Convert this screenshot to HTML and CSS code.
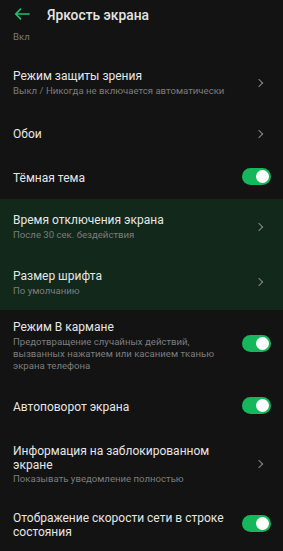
FILE: index.html
```html
<!DOCTYPE html>
<html lang="ru">
<head>
<meta charset="utf-8">
<link rel="stylesheet" href="styles.css">
</head>
<body>
<div class="screen">
  <header class="topbar">
    <svg class="back" width="16" height="12" viewBox="0 0 16 12">
      <path d="M15 6H2M6.5 1.2L1.7 6l4.8 4.8" fill="none" stroke="#22c06c" stroke-width="1.7" stroke-linecap="round" stroke-linejoin="round"/>
    </svg>
    <h1 class="title">Яркость экрана</h1>
  </header>
  <div class="clip"><span class="clip-text">Вкл</span></div>

  <div class="row h56 up3">
    <div class="text"><div class="name">Режим защиты зрения</div><div class="sub">Выкл / Никогда не включается автоматически</div></div>
    <span class="chev"></span>
  </div>
  <div class="row h44">
    <div class="text"><div class="name">Обои</div></div>
    <span class="chev"></span>
  </div>
  <div class="row h43">
    <div class="text"><div class="name">Тёмная тема</div></div>
    <span class="toggle"></span>
  </div>
  <div class="hl">
    <div class="row h55">
      <div class="text"><div class="name">Время отключения экрана</div><div class="sub">После 30 сек. бездействия</div></div>
      <span class="chev"></span>
    </div>
    <div class="row h56">
      <div class="text"><div class="name">Размер шрифта</div><div class="sub">По умолчанию</div></div>
      <span class="chev"></span>
    </div>
  </div>
  <div class="row h76 up6">
    <div class="text"><div class="name">Режим В кармане</div><div class="sub multi">Предотвращение случайных действий, вызванных нажатием или касанием тканью экрана телефона</div></div>
    <span class="toggle"></span>
  </div>
  <div class="row h42">
    <div class="text"><div class="name">Автоповорот экрана</div></div>
    <span class="toggle"></span>
  </div>
  <div class="row h72">
    <div class="text"><div class="name multi">Информация на заблокированном экране</div><div class="sub">Показывать уведомление полностью</div></div>
    <span class="chev"></span>
  </div>
  <div class="row h50">
    <div class="text"><div class="name multi">Отображение скорости сети в строке состояния</div></div>
    <span class="toggle"></span>
  </div>
</div>
</body>
</html>
```
FILE: styles.css
```css
* { box-sizing: border-box; }
html, body { margin: 0; padding: 0; background: #131313; }
body { font-family: Roboto, "Noto Sans", sans-serif; color: #e6e6e6; }
.screen { width: 283px; height: 551px; overflow: hidden; background: #131313; }
.topbar { height: 31px; display: flex; align-items: center; padding-left: 14px; }
.back { display: block; margin-top: -3px; }
.title { margin: -1px 0 0 17px; font-size: 13.8px; font-weight: 500; color: #e4e4e4; line-height: 20px; }
.clip { height: 23px; overflow: hidden; padding-left: 13px; margin-top: 2px; }
.clip-text { display: block; font-size: 9.6px; line-height: 13px; color: #7a7a7a; margin-top: -3px; }
.row { display: flex; align-items: center; padding: 0 12px 0 13px; }
.row.up3 { padding-bottom: 3px; }
.row.up6 { padding-bottom: 6px; }
.text { flex: 1; min-width: 0; }
.name { font-size: 12px; line-height: 16px; color: #e6e6e6; }
.name.multi { line-height: 14px; padding-right: 8px; }
.sub { font-size: 9.6px; line-height: 13px; color: #7d7d7d; }
.sub.multi { line-height: 12px; padding-right: 8px; padding-top: 1px; }
.h42 { height: 42px; }
.h43 { height: 43px; }
.h44 { height: 44px; }
.h50 { height: 50px; }
.h55 { height: 55px; }
.h56 { height: 56px; }
.h72 { height: 72px; }
.h76 { height: 76px; }
.hl { background: #11281a; }
.chev { width: 6px; height: 6px; border-top: 1.3px solid #8a8a8a; border-right: 1.3px solid #8a8a8a; transform: rotate(45deg); margin-right: 9px; flex: none; }
.toggle { position: relative; width: 29px; height: 17px; border-radius: 9px; background: #16b75c; flex: none; margin-top: -3px; }
.toggle::after { content: ""; position: absolute; right: 2px; top: 2px; width: 13px; height: 13px; border-radius: 50%; background: #fff; }
```
